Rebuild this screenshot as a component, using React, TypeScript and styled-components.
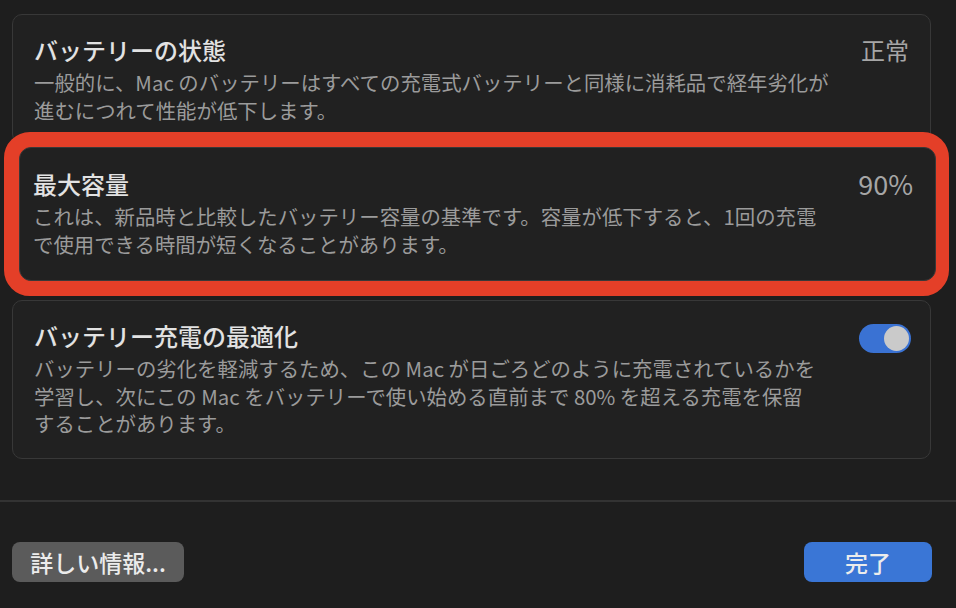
import styled, { createGlobalStyle } from 'styled-components';

const GlobalStyle = createGlobalStyle`
  html, body {
    margin: 0;
    padding: 0;
    background: #1e1e1e;
  }
  body {
    font-family: 'Noto Sans CJK JP', 'Noto Sans', sans-serif;
    color: #e2e2e2;
  }
`;

const Page = styled.div`
  width: 956px;
  height: 608px;
  display: flex;
  flex-direction: column;
  background: #1e1e1e;
  overflow: hidden;
`;

const List = styled.div`
  display: flex;
  flex-direction: column;
  padding-top: 14px;
`;

interface CardProps {
  height: number;
}

const Card = styled.div<CardProps>`
  box-sizing: border-box;
  height: ${props => props.height}px;
  margin: 0 25px 0 12px;
  padding: 19px 21px 0 21px;
  background: #212121;
  border: 1px solid #383838;
  border-radius: 10px;
  display: flex;
  align-items: flex-start;
  justify-content: space-between;
`;

const Highlight = styled.div`
  box-sizing: border-box;
  height: 164px;
  margin: -12px 7px 0 4px;
  border: 15px solid #e43f28;
  border-radius: 26px;
  background: #e43f28;
  display: flex;
`;

const HighlightCard = styled(Card)`
  flex: 1;
  margin: 0 -2px 0 0;
  height: auto;
  border-radius: 12px;
  padding: 20px 22px 0 13px;
`;

const Text = styled.div`
  display: flex;
  flex-direction: column;
`;

const Title = styled.div`
  font-size: 24px;
  line-height: 32px;
  font-weight: 500;
  color: #e2e2e2;
`;

const Desc = styled.div`
  margin-top: 3px;
  font-size: 20.4px;
  line-height: 27.5px;
  color: #9b9b9b;
  white-space: nowrap;
`;

interface ValueProps {
  latin?: boolean;
}

const Value = styled.div<ValueProps>`
  font-size: ${props => (props.latin ? '27px' : '24px')};
  line-height: 32px;
  color: #a6a6a6;
`;

const Toggle = styled.div`
  box-sizing: border-box;
  width: 52px;
  height: 29px;
  margin-top: 4px;
  margin-right: -2px;
  border-radius: 15px;
  background: #3a72d3;
  padding: 2px;
  display: flex;
  justify-content: flex-end;
`;

const Knob = styled.div`
  width: 25px;
  height: 25px;
  border-radius: 50%;
  background: #cacaca;
`;

const Divider = styled.div`
  height: 2px;
  margin-top: 41px;
  background: #333333;
`;

const Footer = styled.div`
  display: flex;
  justify-content: space-between;
  padding: 40px 24px 0 12px;
`;

interface ButtonProps {
  primary?: boolean;
}

const Button = styled.button<ButtonProps>`
  height: 40px;
  width: ${props => (props.primary ? '128px' : '172px')};
  border: none;
  border-radius: 8px;
  background: ${props => (props.primary ? '#3a76d6' : '#5b5b5b')};
  color: #ececec;
  font-family: 'Noto Sans CJK JP', 'Noto Sans', sans-serif;
  font-size: 23px;
  font-weight: 500;
  line-height: 40px;
  padding: 0;
  text-align: center;
`;

export default function App() {
  return (
    <Page>
      <GlobalStyle />
      <List>
        <Card height={130}>
          <Text>
            <Title>バッテリーの状態</Title>
            <Desc>
              一般的に、Mac のバッテリーはすべての充電式バッテリーと同様に消耗品で経年劣化が
              <br />
              進むにつれて性能が低下します。
            </Desc>
          </Text>
          <Value>正常</Value>
        </Card>
        <Highlight>
          <HighlightCard height={0}>
            <Text>
              <Title>最大容量</Title>
              <Desc>
                これは、新品時と比較したバッテリー容量の基準です。容量が低下すると、1回の充電
                <br />
                で使用できる時間が短くなることがあります。
              </Desc>
            </Text>
            <Value latin>90%</Value>
          </HighlightCard>
        </Highlight>
        <Card height={159} style={{ marginTop: 4 }}>
          <Text>
            <Title>バッテリー充電の最適化</Title>
            <Desc>
              バッテリーの劣化を軽減するため、この Mac が日ごろどのように充電されているかを
              <br />
              学習し、次にこの Mac をバッテリーで使い始める直前まで 80% を超える充電を保留
              <br />
              することがあります。
            </Desc>
          </Text>
          <Toggle>
            <Knob />
          </Toggle>
        </Card>
      </List>
      <Divider />
      <Footer>
        <Button>詳しい情報...</Button>
        <Button primary>完了</Button>
      </Footer>
    </Page>
  );
}
